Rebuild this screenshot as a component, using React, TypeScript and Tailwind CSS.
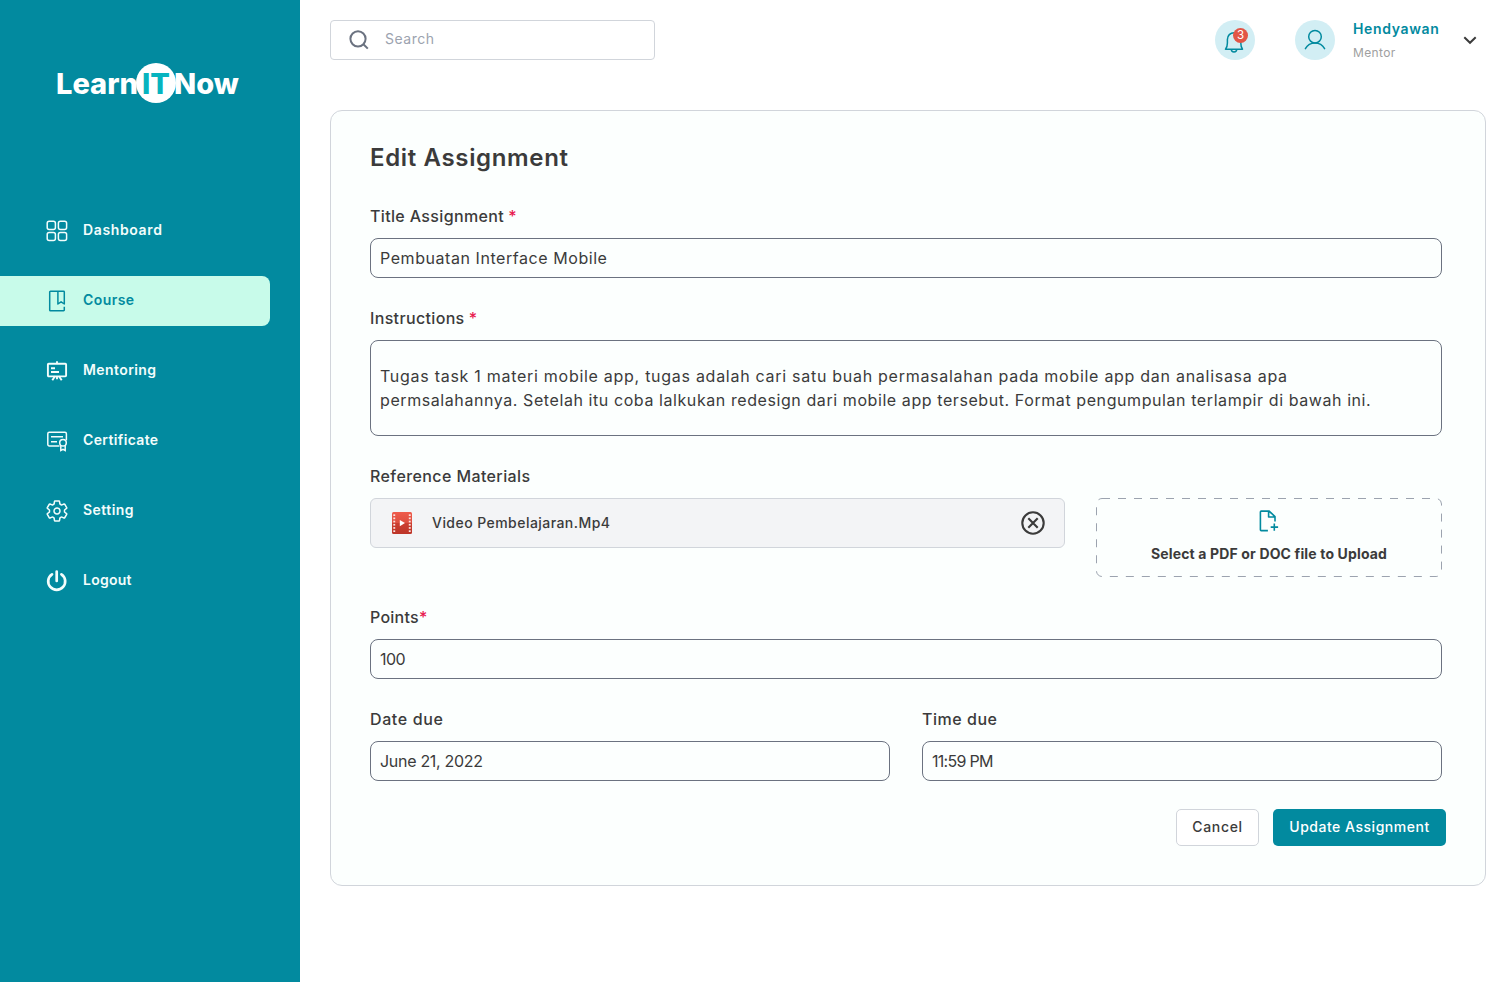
import type { ReactNode } from "react";
import { IoSettingsOutline } from "react-icons/io5";

function DashboardIcon() {
  return (
    <svg width="24" height="24" viewBox="0 0 24 24" fill="none" stroke="currentColor" strokeWidth="1.5">
      <rect x="2.2" y="2.2" width="8.2" height="8.2" rx="2" />
      <rect x="13.4" y="2.2" width="8.2" height="8.2" rx="2" />
      <rect x="2.2" y="13.4" width="8.2" height="8.2" rx="2" />
      <rect x="13.4" y="13.4" width="8.2" height="8.2" rx="2" />
    </svg>
  );
}

function CourseIcon() {
  return (
    <svg width="24" height="24" viewBox="0 0 24 24" fill="none" stroke="currentColor" strokeWidth="1.5" strokeLinejoin="round">
      <path d="M19.3 17.8v3.2c0 .4-.3.7-.7.7H5.5a.8.8 0 0 1-.8-.8V3c0-.4.3-.7.8-.7h13c.5 0 .8.3.8.7v12l-3.2-2.2-3.2 2.2V2.3" />
    </svg>
  );
}

function MentoringIcon() {
  return (
    <svg width="24" height="24" viewBox="0 0 24 24" fill="none" stroke="currentColor" strokeWidth="1.9">
      <rect x="2.9" y="4.7" width="18.2" height="12.7" rx=".8" />
      <path d="M12 2.2v2.5M6 9.3h4M6 13h8M10 17.2l-2.7 4.1M14 17.2l2.7 4.1M12 17.2v3" />
    </svg>
  );
}

function CertificateIcon() {
  return (
    <svg width="24" height="24" viewBox="0 0 24 24" fill="none" stroke="currentColor" strokeWidth="1.5">
      <path d="M14.5 17H4.300a1.500 1.500 0 0 1-1.500-1.500V4.800c0-.8.700-1.500 1.500-1.500h15.600c.8 0 1.500.7 1.500 1.500v6.500" />
      <path d="M6 7.700h12M6 12.800h6" />
      <circle cx="18" cy="13.800" r="3.300" />
      <path d="M15.800 16.500v5l2.200-1.200 2.200 1.200v-5" />
    </svg>
  );
}

function LogoutIcon() {
  return (
    <svg width="24" height="24" viewBox="0 0 24 24" fill="none" stroke="currentColor" strokeWidth="2.7" strokeLinecap="round">
      <path d="M11.7 2.6V12M7 5.300a8.500 8.500 0 1 0 9.400 0" />
    </svg>
  );
}

function SearchIcon() {
  return (
    <svg width="24" height="24" viewBox="0 0 24 24" fill="none" stroke="#6b7280" strokeWidth="2">
      <circle cx="11" cy="10.8" r="7.6" />
      <path d="m16.4 16.2 4.400 4.400" />
    </svg>
  );
}

function BellIcon() {
  return (
    <svg width="24" height="24" viewBox="0 0 24 24" fill="none" stroke="#028a9f" strokeWidth="1.5" strokeLinejoin="round">
      <path d="M3.500 19.200c1.600-1.900 1.900-3.500 1.900-6.200V9.500c0-3.900 2.800-6.800 6.700-6.800s6.700 2.900 6.700 6.800V13c0 2.700.3 4.300 1.700 6.200Z" />
      <path d="M9.300 19.300a2.700 2.700 0 0 0 5.400 0" />
    </svg>
  );
}

function UserIcon() {
  return (
    <svg width="24" height="24" viewBox="0 0 24 24" fill="none" stroke="#028a9f" strokeWidth="1.5" strokeLinecap="round">
      <circle cx="12" cy="8.700" r="6.300" />
      <path d="M2.400 20.700c2-3.700 5.500-5.700 9.600-5.700s7.600 2 9.600 5.700" />
    </svg>
  );
}

function VideoIcon() {
  const holes = [3.3, 6.5, 9.7, 12.9, 16.1, 19.3];
  return (
    <svg width="20" height="22" viewBox="0 0 20 22">
      <defs>
        <linearGradient id="film" x1="0" y1="0" x2="0" y2="1">
          <stop offset="0" stopColor="#ef5b4b" />
          <stop offset=".5" stopColor="#dd4e40" />
          <stop offset=".5" stopColor="#cc3f31" />
          <stop offset="1" stopColor="#bd3529" />
        </linearGradient>
      </defs>
      <rect width="20" height="22" rx="1.5" fill="url(#film)" />
      {holes.map((y) => (
        <g key={y} fill="#fbe4e1">
          <rect x="1.3" y={y - 1} width="1.9" height="1.7" />
          <rect x="16.8" y={y - 1} width="1.9" height="1.7" />
        </g>
      ))}
      <path d="M7.8 8v6.200l5.200-3.100Z" fill="#fff" />
    </svg>
  );
}

function CloseIcon() {
  return (
    <svg width="24" height="24" viewBox="0 0 24 24" fill="none" stroke="#3b3b3b" strokeWidth="2.1">
      <circle cx="12" cy="12" r="10.7" />
      <path d="m7.300 7.300 9.400 9.400M16.700 7.300l-9.400 9.400" />
    </svg>
  );
}

function FilePlusIcon() {
  return (
    <svg width="24" height="24" viewBox="0 0 24 24" fill="none" stroke="#028a9f" strokeWidth="1.6" strokeLinejoin="round">
      <path d="M10.900 21.600H4.200c-.5 0-.8-.3-.8-.8V2.900c0-.5.3-.8.800-.8h8l5.800 5.600v4.700M11.600 2.100v5.900h6.200M17.300 14.500v7.200M13.700 18.100h7.400" />
    </svg>
  );
}

function NavItem({ icon, label, tracking, active }: { icon: ReactNode; label: string; tracking: string; active?: boolean }) {
  return (
    <a
      href="#"
      className={`flex h-[50px] w-[270px] items-center gap-3.5 rounded-r-lg pb-0.5 pl-[45px] text-sm font-semibold ${
        active ? "bg-[#c8fbea] text-[#028a9f]" : "text-[#f3fdfc]"
      }`}
    >
      <span className="pt-0.5">{icon}</span>
      <span className={tracking}>{label}</span>
    </a>
  );
}

function Field({ label, tracking, star, children }: { label: string; tracking: string; star?: string; children: ReactNode }) {
  return (
    <div className="flex flex-1 flex-col gap-2.5">
      <div className="h-6 leading-6 font-medium">
        <span className={tracking}>{label}</span>
        {star && <span className="text-[#e8194f]">{star}</span>}
      </div>
      {children}
    </div>
  );
}

function Box({ children }: { children: ReactNode }) {
  return <div className="flex h-10 items-center rounded-lg border border-[#6b7280] px-[9px] whitespace-pre">{children}</div>;
}

export default function App() {
  return (
    <div className="flex h-[982px] w-[1512px] overflow-hidden bg-white font-['Inter',sans-serif] text-[#3b3b3b]">
      <aside className="flex w-[300px] shrink-0 flex-col bg-[#028a9f]">
        <div className="relative mt-[63px] ml-14 flex h-10 items-center text-[29px] leading-10 font-extrabold text-white">
          <span className="absolute left-20 h-10 w-10 rounded-full bg-white" />
          <span className="relative w-[86px] pt-px">Learn</span>
          <span className="relative w-8 pt-px text-[#06b4bf]">IT</span>
          <span className="relative pt-px">Now</span>
        </div>
        <nav className="mt-[103px] flex flex-col gap-5">
          <NavItem icon={<DashboardIcon />} label="Dashboard" tracking="tracking-[0.63px]" />
          <NavItem icon={<CourseIcon />} label="Course" tracking="tracking-[0.42px]" active />
          <NavItem icon={<MentoringIcon />} label="Mentoring" tracking="tracking-[0.41px]" />
          <NavItem icon={<CertificateIcon />} label="Certificate" tracking="tracking-[0.35px]" />
          <NavItem icon={<IoSettingsOutline size={24} />} label="Setting" tracking="tracking-[0.45px]" />
          <NavItem icon={<LogoutIcon />} label="Logout" tracking="tracking-[0.25px]" />
        </nav>
      </aside>

      <div className="flex flex-1 flex-col pl-[30px]">
        <header className="mt-5 flex h-10 items-center">
          <div className="flex h-10 w-[325px] items-center gap-3.5 rounded border border-[#d1d5db] pl-4 text-sm tracking-[0.5px] text-[#9ca3af]">
            <SearchIcon />
            <span className="pb-0.5">Search</span>
          </div>
          <div className="relative ml-[560px] flex h-10 w-10 items-center justify-center rounded-full bg-[#d2eef4]">
            <span className="pt-[3px] pr-0.5"><BellIcon /></span>
            <span className="absolute top-2 left-[18px] flex h-[15px] w-[15px] items-center justify-center rounded-full bg-[#e25546] text-[11.5px] leading-none text-white">3</span>
          </div>
          <div className="ml-10 flex h-10 w-10 items-center justify-center rounded-full bg-[#d2eef4]">
            <UserIcon />
          </div>
          <div className="ml-[18px] flex w-[110px] flex-col">
            <span className="h-[23px] text-sm leading-[22px] font-semibold tracking-[0.65px] text-[#028a9f]">Hendyawan</span>
            <span className="h-[22px] text-xs leading-[24px] tracking-[0.36px] text-[#a0a0a0]">Mentor</span>
          </div>
          <svg width="14" height="10" viewBox="0 0 14 10" fill="none" stroke="#3b3b3b" strokeWidth="2">
            <path d="m1.300 2.300 5.700 5.500 5.700-5.500" />
          </svg>
        </header>

        <main className="mt-[50px] flex h-[776px] w-[1156px] flex-col gap-7 rounded-xl border border-[#d1d5db] bg-[#fcfffe] pt-[29px] pl-[39px]">
          <h1 className="h-9 text-2xl leading-9 font-semibold tracking-[0.65px]">Edit Assignment</h1>
          <div className="flex w-[1072px]">
            <Field label="Title Assignment" tracking="tracking-[0.35px]" star=" *">
              <Box><span className="tracking-[0.56px]">Pembuatan Interface Mobile</span></Box>
            </Field>
          </div>
          <div className="flex w-[1072px]">
            <Field label="Instructions" tracking="tracking-[0.34px]" star=" *">
              <div className="flex h-24 flex-col justify-center rounded-lg border border-[#6b7280] px-[9px] leading-6 whitespace-nowrap">
                <span className="tracking-[0.72px]">Tugas task 1 materi mobile app, tugas adalah cari satu buah permasalahan pada mobile app dan analisasa apa</span>
                <span className="tracking-[0.58px]">permsalahannya. Setelah itu coba lalkukan redesign dari mobile app tersebut. Format pengumpulan terlampir di bawah ini.</span>
              </div>
            </Field>
          </div>
          <div className="flex w-[1072px]">
            <Field label="Reference Materials" tracking="tracking-[0.4px]">
              <div className="flex justify-between">
                <div className="flex h-[50px] w-[695px] items-center rounded-md border border-[#d1d5db] bg-[#f3f4f6] pr-[19px] pl-[21px]">
                  <VideoIcon />
                  <span className="ml-5 flex-1 text-sm font-medium tracking-[0.45px]">Video Pembelajaran.Mp4</span>
                  <CloseIcon />
                </div>
                <div className="relative flex h-[79px] w-[346px] flex-col items-center">
                  <svg className="absolute inset-0" width="346" height="79" viewBox="0 0 346 79" fill="none">
                    <rect x=".5" y=".5" width="345" height="78" rx="5.5" stroke="#9ca3af" strokeDasharray="8 8" />
                  </svg>
                  <span className="mt-[11px]"><FilePlusIcon /></span>
                  <span className="mt-[9px] text-sm leading-6 font-bold tracking-[0.15px]">Select a PDF or DOC file to Upload</span>
                </div>
              </div>
            </Field>
          </div>
          <div className="flex w-[1072px]">
            <Field label="Points" tracking="tracking-[0.25px]" star="*">
              <Box><span className="tracking-[-0.5px]">100</span></Box>
            </Field>
          </div>
          <div className="flex w-[1072px] gap-8">
            <Field label="Date due" tracking="tracking-[0.62px]">
              <Box><span className="tracking-[-0.3px]">June 21, 2022</span></Box>
            </Field>
            <Field label="Time due" tracking="tracking-[0.53px]">
              <Box><span className="tracking-[-0.7px]">11:59 PM</span></Box>
            </Field>
          </div>
          <div className="flex w-[1076px] justify-end gap-3.5 text-sm font-medium">
            <button className="h-[37px] w-[83px] rounded-[5px] border border-[#d1d5db] bg-white pb-0.5 tracking-[0.65px]">Cancel</button>
            <button className="h-[37px] w-[173px] rounded-[5px] bg-[#028a9f] pb-0.5 tracking-[0.52px] text-white">Update Assignment</button>
          </div>
        </main>
      </div>
    </div>
  );
}
